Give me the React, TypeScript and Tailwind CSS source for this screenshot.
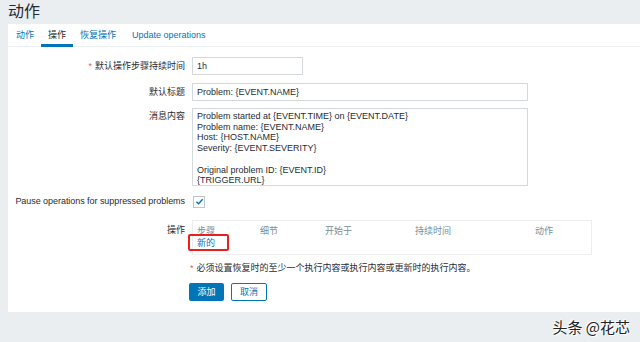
import React from "react";

const font = { fontFamily: '"Liberation Sans", Arial, "Noto Sans CJK SC", sans-serif' };

export default function App() {
  return (
    <div className="w-[640px] h-[342px] bg-[#ebeef0] flex flex-col overflow-hidden text-[9px] leading-[11px] text-[#1f2c33]" style={font}>
      <div className="h-[24px] pl-[8px] flex items-center text-[16px] leading-[16px] text-[#1f2c33]">动作</div>
      <div className="ml-[8px] bg-white h-[288px] flex flex-col">
        <div className="h-[23px] border-b border-[#ebeef0] flex items-stretch pl-[1px]">
          <div className="px-[7px] flex items-center text-[#0275b8]">动作</div>
          <div className="px-[7px] flex items-center relative text-[#1f2c33]">
            操作
            <div className="absolute left-0 right-0 bottom-[-1px] h-[3px] bg-[#0275b8]" />
          </div>
          <div className="px-[7px] flex items-center text-[#0275b8]">恢复操作</div>
          <div className="px-[7px] ml-[2px] flex items-center text-[#0275b8]">Update operations</div>
        </div>
        <div className="pt-[10px] flex flex-col">
          <div className="flex items-center h-[18px]">
            <div className="w-[184px] text-right pr-[7px]"><span className="text-[#e45959] mr-[3px]">*</span>默认操作步骤持续时间</div>
            <div className="w-[111px] h-[18px] border border-[#d5d9dc] px-[4px] flex items-center">1h</div>
          </div>
          <div className="flex items-center h-[18px] mt-[8px]">
            <div className="w-[184px] text-right pr-[7px]">默认标题</div>
            <div className="w-[336px] h-[18px] border border-[#d5d9dc] px-[4px] flex items-center">Problem: {"{EVENT.NAME}"}</div>
          </div>
          <div className="flex items-start mt-[7px]">
            <div className="w-[184px] text-right pr-[7px] pt-[3px]">消息内容</div>
            <div className="w-[336px] h-[78px] border border-[#d5d9dc] px-[4px] pt-[2px] leading-[10.7px] whitespace-pre">
{`Problem started at {EVENT.TIME} on {EVENT.DATE}
Problem name: {EVENT.NAME}
Host: {HOST.NAME}
Severity: {EVENT.SEVERITY}

Original problem ID: {EVENT.ID}
{TRIGGER.URL}`}
            </div>
          </div>
          <div className="flex items-center mt-[9px] h-[13px]">
            <div className="w-[185px] text-right pr-[8px] whitespace-nowrap tracking-[-0.05px]">Pause operations for suppressed problems</div>
            <div className="w-[12px] h-[12px] border border-[#bfc6cb] flex items-center justify-center">
              <svg width="9" height="9" viewBox="0 0 10 10"><path d="M1.5 5.2 L4 7.5 L8.5 2.5" fill="none" stroke="#0275b8" strokeWidth="1.6" /></svg>
            </div>
          </div>
          <div className="flex items-start mt-[12px]">
            <div className="w-[184px] text-right pr-[7px] pt-[5px]">操作</div>
            <div className="w-[400px] h-[35px] border border-[#ebeef0] relative">
              <div className="flex text-[#768d99] pt-[5px] pl-[4px]">
                <div className="w-[63px]">步骤</div>
                <div className="w-[65px]">细节</div>
                <div className="w-[90px]">开始于</div>
                <div className="w-[120px]">持续时间</div>
                <div>动作</div>
              </div>
              <div className="pl-[4px] mt-[1px] text-[#0275b8]">新的</div>
              <div className="absolute left-[-5px] top-[13px] w-[41px] h-[17px] border-2 border-[#e8201e] rounded-[2px]" />
            </div>
          </div>
          <div className="mt-[8px] pl-[182px]"><span className="text-[#e45959] mr-[3px]">*</span>必须设置恢复时的至少一个执行内容或执行内容或更新时的执行内容。</div>
          <div className="mt-[9px] pl-[181px] flex gap-[7px]">
            <div className="w-[35px] h-[18px] bg-[#0275b8] text-white flex items-center justify-center rounded-[2px]">添加</div>
            <div className="w-[36px] h-[18px] border border-[#0275b8] text-[#0275b8] flex items-center justify-center rounded-[2px]">取消</div>
          </div>
        </div>
      </div>
      <div className="flex-1 flex items-center justify-end pr-[10px]">
        <span className="text-[15px] leading-[18px] text-[#222]" style={{ textShadow: "1px 1px 0 #fff, -1px -1px 0 #fff", fontFamily: '"Noto Sans CJK SC", sans-serif' }}>头条 @花芯</span>
      </div>
    </div>
  );
}
